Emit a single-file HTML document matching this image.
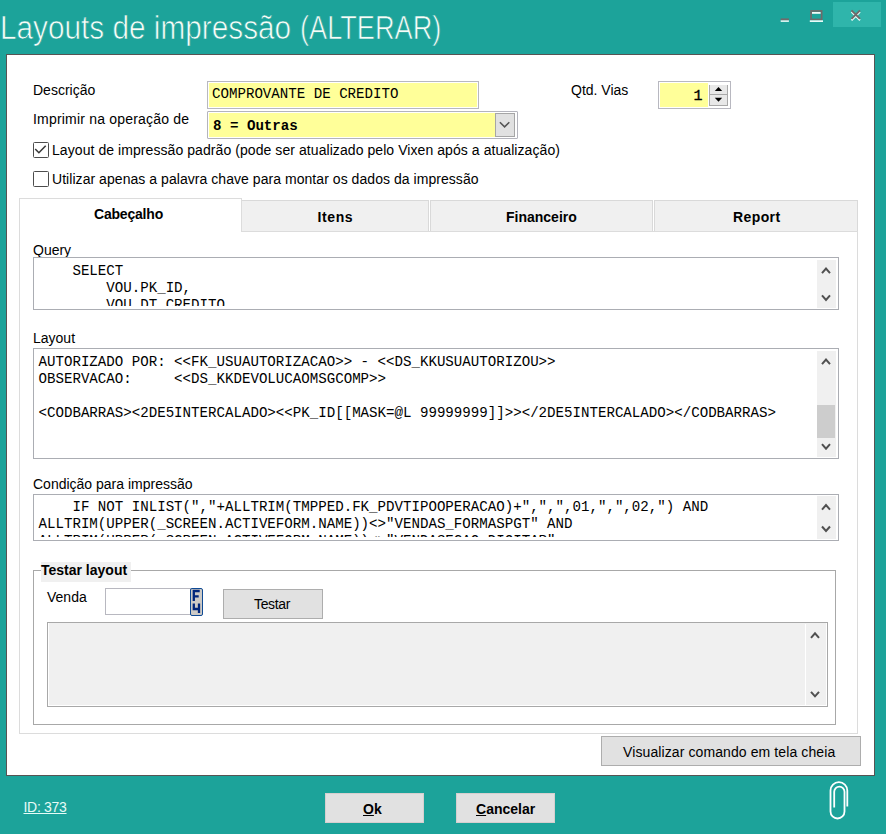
<!DOCTYPE html>
<html><head><meta charset="utf-8">
<style>
*{margin:0;padding:0;box-sizing:border-box}
html,body{width:886px;height:834px;overflow:hidden}
body{background:#1ca39a;font-family:"Liberation Sans",sans-serif;font-size:14px;color:#000;position:relative}
.a{position:absolute}
.t{position:absolute;white-space:pre;line-height:1}
.mono{font-family:"Liberation Mono",monospace;font-size:14.13px}
.b{font-weight:bold}
#title{left:0px;top:11.8px;font-size:32.5px;color:#f6fdf8;-webkit-text-stroke:0.7px #1ca39a;paint-order:normal;white-space:pre;position:absolute;line-height:1;transform-origin:0 0}
.tb{border:1px solid #abadb3;background:#fff}
.btn{background:#e1e1e1;border:1px solid #adadad}
.sb{position:absolute;background:#f0f0f0}
.tab{position:absolute;top:200px;height:32px;background:#f0f0f0;border:1px solid #d9d9d9;border-bottom:none}
.clip{position:absolute;overflow:hidden}
.code{position:absolute;left:0;white-space:pre;line-height:17px}
</style></head><body>
<div id="title" style="transform:scaleX(0.9156)">Layouts de impressão</div><div id="title" style="left:300.3px;transform:scaleX(0.836)">(ALTERAR)</div>

<!-- window buttons -->
<div class="a" style="left:833px;top:2px;width:48px;height:25px;background:#2fb5ab"></div>
<svg class="a" style="left:770px;top:0" width="116" height="34" viewBox="770 0 116 34">
  <rect x="780.7" y="20.2" width="8.2" height="1.7" fill="#e8fbf8"/>
  <rect x="780.7" y="18.4" width="8.2" height="1.8" fill="#6f6a6a"/>
  <rect x="811.05" y="10.95" width="10.6" height="8.5" fill="none" stroke="#6f6a6a" stroke-width="1.7"/>
  <rect x="812" y="12" width="8.6" height="1.8" fill="#f0fbf8"/>
  <rect x="809.8" y="20.3" width="13.2" height="1.7" fill="#e8fbf8"/>
  <path d="M851.5 11.8 L860 20.3 M860 11.8 L851.5 20.3" stroke="#e8fbf8" stroke-width="1.9"/>
  <path d="M851.5 10.4 L860 18.9 M860 10.4 L851.5 18.9" stroke="#6f6a6a" stroke-width="1.9"/>
</svg>

<div class="a" style="left:6px;top:54px;width:869px;height:722px;background:#fff;border:1px solid #575353"></div>

<!-- labels -->
<div class="t" style="left:33px;top:83px">Descrição</div>
<div class="t" style="left:33px;top:112px;letter-spacing:0.2px">Imprimir na operação de</div>
<div class="t" style="left:571px;top:83px">Qtd. Vias</div>

<!-- descricao input -->
<div class="a" style="left:207px;top:81px;width:272px;height:28px;border:1px solid #b8b8c0;background:#fff;padding:1px">
  <div style="width:100%;height:100%;background:#ffff99"></div>
</div>
<div class="t mono" style="left:212px;top:87px">COMPROVANTE DE CREDITO</div>

<!-- combo -->
<div class="a" style="left:207px;top:110.5px;width:311px;height:28.5px;border:1px solid #b4b4bc;border-radius:1px;background:#fff"></div>
<div class="a" style="left:209px;top:112.5px;width:286px;height:24.5px;background:#ffff99"></div>
<div class="a" style="left:495px;top:113px;width:20px;height:24px;background:#e1e1e1;border:1px solid #a6a6a6"></div>
<svg class="a" style="left:495px;top:113px" width="20" height="24"><path d="M4.9 9.2 L9.6 13.8 L14.3 9.2" fill="none" stroke="#555" stroke-width="1.6"/></svg>
<div class="t mono b" style="left:213px;top:119px">8 = Outras</div>

<!-- spinner -->
<div class="a" style="left:658px;top:81px;width:73px;height:28px;border:1px solid #b8b8c0;background:#fff"></div>
<div class="a" style="left:660px;top:83px;width:48px;height:24px;background:#ffff99"></div>
<div class="a" style="left:709px;top:85px;width:19px;height:10px;background:#e8e8e8;border-left:1px solid #a8a8a8;border-right:1px solid #a8a8a8;border-bottom:1px solid #a8a8a8"></div>
<div class="a" style="left:709px;top:95px;width:19px;height:11px;background:#e8e8e8;border-left:1px solid #a8a8a8;border-right:1px solid #a8a8a8;border-bottom:1px solid #a8a8a8"></div>
<svg class="a" style="left:709px;top:84px" width="19" height="22"><path d="M5.8 7 L9.5 3 L13.2 7Z" fill="#000"/><path d="M5.8 13.8 L13.2 13.8 L9.5 17.8Z" fill="#000"/></svg>
<div class="t mono" style="left:693.5px;top:88.5px;font-size:15px;-webkit-text-stroke:0.35px #000">1</div>

<!-- checkboxes -->
<div class="a" style="left:33px;top:142px;width:15.5px;height:15.5px;border:1.6px solid #4d4d4d;border-radius:1.5px"></div>
<svg class="a" style="left:33px;top:142px" width="15" height="15"><path d="M2.2 7 L5.9 10.7 L12.7 3.7" fill="none" stroke="#3a3a3a" stroke-width="1.6"/></svg>
<div class="t" style="left:52px;top:143px;letter-spacing:0.07px">Layout de impressão padrão (pode ser atualizado pelo Vixen após a atualização)</div>
<div class="a" style="left:33px;top:171px;width:15.5px;height:15.5px;border:1.6px solid #4d4d4d;border-radius:1.5px"></div>
<div class="t" style="left:52px;top:172px;letter-spacing:0.05px">Utilizar apenas a palavra chave para montar os dados da impressão</div>

<!-- tabs -->
<div class="a" style="left:19px;top:231px;width:839px;height:503px;border:1px solid #dcdcdc;border-top:none"></div>
<div class="a" style="left:241px;top:231px;width:617px;height:1px;background:#dcdcdc"></div>
<div class="tab" style="left:241px;width:188px;height:31px"></div>
<div class="tab" style="left:430px;width:223px;height:31px"></div>
<div class="tab" style="left:654px;width:204px;height:31px"></div>
<div class="a" style="left:19px;top:198px;width:223px;height:34px;background:#fff;border:1px solid #dcdcdc;border-bottom:none"></div>
<div class="t b" style="left:94px;top:207px;letter-spacing:-0.2px">Cabeçalho</div>
<div class="t b" style="left:317.5px;top:210px;letter-spacing:0.6px">Itens</div>
<div class="t b" style="left:506px;top:210px">Financeiro</div>
<div class="t b" style="left:733px;top:210px;letter-spacing:0.4px">Report</div>

<!-- Query -->
<div class="t" style="left:33px;top:243px">Query</div>
<div class="a tb" style="left:33px;top:257px;width:806px;height:53px"></div>
<div class="clip" style="left:34px;top:258px;width:783px;height:48px">
  <div class="mono code" style="left:4.5px;top:5px">    SELECT
        VOU.PK_ID,
        VOU.DT_CREDITO</div>
</div>
<div class="sb" style="left:817px;top:260px;width:19px;height:48px"></div>
<svg class="a" style="left:817px;top:260px" width="19" height="48"><path d="M5 13.1 L9 8.6 L13 13.1 M5 35.4 L9 39.9 L13 35.4" fill="none" stroke="#505050" stroke-width="2"/></svg>

<!-- Layout -->
<div class="t" style="left:33px;top:331px">Layout</div>
<div class="a tb" style="left:33px;top:348px;width:806px;height:111px"></div>
<div class="clip" style="left:34px;top:349px;width:783px;height:106px">
  <div class="mono code" style="left:4.5px;top:5px">AUTORIZADO POR: &lt;&lt;FK_USUAUTORIZACAO&gt;&gt; - &lt;&lt;DS_KKUSUAUTORIZOU&gt;&gt;
OBSERVACAO:     &lt;&lt;DS_KKDEVOLUCAOMSGCOMP&gt;&gt;

&lt;CODBARRAS&gt;&lt;2DE5INTERCALADO&gt;&lt;&lt;PK_ID[[MASK=@L 99999999]]&gt;&gt;&lt;/2DE5INTERCALADO&gt;&lt;/CODBARRAS&gt;</div>
</div>
<div class="sb" style="left:817px;top:351px;width:19px;height:106px"></div>
<div class="a" style="left:817px;top:405px;width:18px;height:33px;background:#cdcdcd"></div>
<svg class="a" style="left:817px;top:351px" width="19" height="106"><path d="M5 13.1 L9 8.6 L13 13.1 M5 93.2 L9 97.7 L13 93.2" fill="none" stroke="#505050" stroke-width="2"/></svg>

<!-- Condicao -->
<div class="t" style="left:33px;top:477px">Condição para impressão</div>
<div class="a tb" style="left:33px;top:494px;width:806px;height:47px"></div>
<div class="clip" style="left:34px;top:495px;width:783px;height:41.5px">
  <div class="mono code" style="left:4.5px;top:3.5px">    IF NOT INLIST(&quot;,&quot;+ALLTRIM(TMPPED.FK_PDVTIPOOPERACAO)+&quot;,&quot;,&quot;,01,&quot;,&quot;,02,&quot;) AND
ALLTRIM(UPPER(_SCREEN.ACTIVEFORM.NAME))&lt;&gt;&quot;VENDAS_FORMASPGT&quot; AND
ALLTRIM(UPPER(_SCREEN.ACTIVEFORM.NAME))&lt;&gt;&quot;VENDASECAO_DIGITAR&quot;</div>
</div>
<div class="sb" style="left:817px;top:496px;width:19px;height:43px"></div>
<svg class="a" style="left:817px;top:496px" width="19" height="43"><path d="M5 13.6 L9 9.1 L13 13.6 M5 30.5 L9 35 L13 30.5" fill="none" stroke="#505050" stroke-width="2"/></svg>

<!-- Testar layout group -->
<div class="a" style="left:33px;top:570px;width:803px;height:155px;border:1px solid #a8a8a8"></div>
<div class="a" style="left:41px;top:562px;width:90px;height:20px;background:#f0f0f0"></div>
<div class="t b" style="left:41px;top:563px">Testar layout</div>
<div class="t" style="left:47px;top:589.5px">Venda</div>
<div class="a" style="left:105px;top:588px;width:86px;height:27px;border:1px solid #b8b8c0;border-right:none;background:#fff"></div>
<div class="a" style="left:189.8px;top:588px;width:12.8px;height:28px;background:#cdcac6;border:1.8px solid #0f4a94;border-radius:2px"></div>
<svg class="a" style="left:189.8px;top:588px" width="13" height="28"><path d="M3.8 13 V3 H9.7 M3.8 8.3 H8.7 M3.8 15.5 V21 H9 M9 15.5 V25" fill="none" stroke="#00257a" stroke-width="2.3"/></svg>
<div class="a btn" style="left:223px;top:589px;width:100px;height:30px"></div>
<div class="t" style="left:254px;top:597px;letter-spacing:-0.35px">Testar</div>
<div class="a" style="left:47px;top:622px;width:781px;height:85px;background:#f0f0f0;border:1px solid #a8a8a8"></div>
<div class="a" style="left:48px;top:623px;width:1px;height:83px;background:#fff"></div>
<div class="a" style="left:826px;top:623px;width:1px;height:83px;background:#fff"></div>
<div class="a" style="left:48px;top:705px;width:778px;height:1px;background:#fff"></div>
<div class="a" style="left:805px;top:624px;width:1px;height:81px;background:#fff"></div>
<svg class="a" style="left:806px;top:624px" width="20" height="81"><path d="M5 13.8 L9 9.3 L13 13.8 M5 67.8 L9 72.3 L13 67.8" fill="none" stroke="#505050" stroke-width="2"/></svg>

<!-- Visualizar button -->
<div class="a btn" style="left:601px;top:736px;width:260px;height:30px"></div>
<div class="t" style="left:623px;top:745px;letter-spacing:0.1px">Visualizar comando em tela cheia</div>

<!-- bottom bar -->
<div class="t" style="left:23.5px;top:800px;color:#e6fbf7;text-decoration:underline;font-size:14px;letter-spacing:-0.3px">ID: 373</div>
<div class="a btn" style="left:325px;top:793px;width:99px;height:30px;border-color:#d6cfcf"></div>
<div class="t b" style="left:363px;top:802px"><u>O</u>k</div>
<div class="a btn" style="left:456px;top:793px;width:99px;height:30px;border-color:#d6cfcf"></div>
<div class="t b" style="left:476px;top:802px"><u>C</u>ancelar</div>
<svg class="a" style="left:810px;top:770px" width="60" height="64" viewBox="810 770 60 64">
  <path d="M847.3 806.5 V790.5 A8.4 8.4 0 0 0 830.5 790.5 V811.5 A7 7 0 0 0 844.5 811.5 V791.7 A5.15 5.15 0 0 0 834.2 791.7 V807.5" fill="none" stroke="#fff" stroke-width="1.8"/>
</svg>
</body></html>
